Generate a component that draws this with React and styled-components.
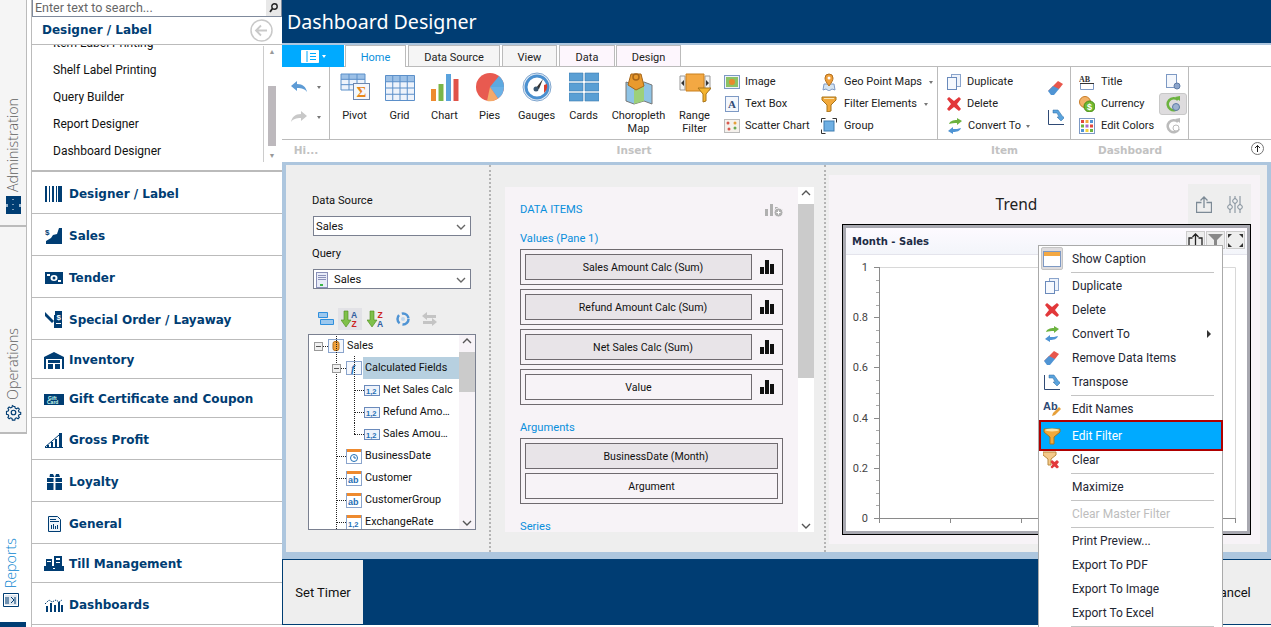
import React from "react";
import styled, { createGlobalStyle } from "styled-components";

const NAVY = "#003d73";
const FONT = `Roboto, "Noto Sans", "Liberation Sans", sans-serif`;

const Global = createGlobalStyle`
  html, body { margin: 0; padding: 0; background: #fff; overflow: hidden; }
  #root { width: 1271px; height: 627px; }
  * { box-sizing: border-box; }
`;

const Page = styled.div`
  position: relative; width: 1271px; height: 627px; overflow: hidden;
  display: grid; grid-template-columns: 32px 250px 1fr;
  font: 12px/16px ${FONT}; color: #1c2430; background: #fff;
`;

/* rail */
const Rail = styled.div`display: flex; flex-direction: column; height: 627px; border-right: 1px solid #bbb;`;
const RailTab = styled.div`
  height: ${p => p.$h}px; width: ${p => p.$w}px; flex: none;
  background: ${p => p.$active ? "#fff" : "#f5f5f5"};
  border-right: ${p => p.$active ? "none" : "1px solid #bbb"};
  border-bottom: ${p => p.$active ? "none" : "2px solid #bbb"};
  display: flex; flex-direction: column; align-items: center; justify-content: flex-end;
  padding-bottom: ${p => p.$pb}px; gap: ${p => p.$active ? 5 : 4}px;
  color: ${p => p.$active ? "#0a86d0" : "#5f5f5f"};
`;
const RailLabel = styled.span`
  writing-mode: vertical-rl; transform: rotate(180deg);
  font: 300 14.300px/16px "Open Sans", ${FONT};
`;
const RailEnd = styled.div`flex: 1; width: 26px; background: ${NAVY};`;

/* nav */
const Nav = styled.div`display: flex; flex-direction: column; height: 627px;`;
const SearchBar = styled.div`
  height: 17px; flex: none; display: flex; border: 1px solid #7f8a9c; border-top: none;
  color: #666; font-size: 12.500px; line-height: 14px; padding-left: 2px; align-items: center; justify-content: space-between;
`;
const SearchBtn = styled.div`width: 15px; height: 16px; background: #e8e8e8; display: flex; align-items: center; justify-content: center;`;
const NavHead = styled.div`
  height: 28px; flex: none; display: flex; align-items: center; justify-content: space-between;
  padding: 0 9px 1px 10px; border-bottom: 1px solid #bbb; color: ${NAVY};
  font: bold 12px/16px "DejaVu Sans", sans-serif;
`;
const NavList = styled.div`
  height: 127px; flex: none; position: relative; overflow: hidden; display: flex; justify-content: space-between;
  border-bottom: 2px solid #bbb;
`;
const NavLinks = styled.div`margin-top: -15px; padding-left: 21px; color: #111;`;
const NavLink = styled.div`height: 27px; line-height: 27px;`;
const NavScroll = styled.div`
  width: 17px; margin: 1px 2px 8px 0; border-left: 1px solid #ccc; display: flex; flex-direction: column;
  align-items: center; justify-content: space-between; position: relative; color: #999; font-size: 7px; line-height: 12px;
`;
const NavThumb = styled.div`position: absolute; top: 40px; left: 4px; width: 8px; height: 60px; background: #bdb9bd;`;
const Accordion = styled.div`
  height: ${p => p.$h}px; flex: none; display: flex; align-items: center; gap: 5px;
  padding: 2px 0 0 12px; border-bottom: 1px solid #bbb;
  color: ${NAVY}; font: bold 12px/16px "DejaVu Sans", sans-serif;
`;
const NavIconBox = styled.span`width: 20px; height: 20px; flex: none; display: flex; align-items: center; justify-content: center;`;

/* main */
const Main = styled.div`display: flex; flex-direction: column; height: 627px; min-width: 0;`;
const TitleBar = styled.div`
  height: 43px; flex: none; background: ${NAVY}; color: #fff; padding: 8px 5px 0;
  font: 19.600px/28px "Noto Sans", sans-serif;
`;
const TitleRule = styled.div`height: 2px; flex: none; background: #adc6de;`;
const TabRow = styled.div`height: 22px; flex: none; display: flex; border-bottom: 1px solid #bbb; position: relative; font-size: 11px;`;
const AppMenu = styled.div`
  width: 62px; height: 22px; background: #00aaff; display: flex; align-items: center; justify-content: center; gap: 3px;
  margin-right: 1px;
`;
const Tab = styled.div`
  width: ${p => p.$w}px; height: ${p => p.$active ? 22 : 21}px; margin-right: ${p => p.$mr}px; text-align: center; line-height: 24px;
  border: 1px solid #bbb; border-bottom: none; z-index: 1;
  background: ${p => p.$active ? "#fff" : p.$tint ? "#fdf6fd" : "#f5f5f5"};
  color: ${p => p.$active ? "#0a8fdc" : "#222"};
`;
const Ribbon = styled.div`height: 73px; flex: none; display: flex; border-bottom: 1px solid #bbb; font-size: 11px;`;
const RGroup = styled.div`
  width: ${p => p.$w}px; flex: none; border-right: 1px solid #bbb; display: flex;
  padding: ${p => p.$pad || "0"};
`;
const HistoryCol = styled.div`display: flex; flex-direction: column; gap: 10px; padding: 10px 0 0 9px;`;
const HistoryBtn = styled.div`display: flex; align-items: center; gap: 10px; height: 20px;`;
const Caret = styled.span`
  width: 0; height: 0; border-left: 2.500px solid transparent; border-right: 2.500px solid transparent;
  border-top: 3px solid ${p => p.$c || "#777"}; display: inline-block; flex: none;
`;
const BigBtn = styled.div`
  width: ${p => p.$w}px; flex: none; display: flex; flex-direction: column; align-items: center; padding-top: 5px;
  text-align: center; line-height: 13px; color: #222;
`;
const BigIcon = styled.div`height: 32px; margin-bottom: 5px;`;
const SmallCol = styled.div`
  width: ${p => p.$w}px; flex: none; display: flex; flex-direction: column; padding-top: 4px;
  margin-left: ${p => p.$ml || 0}px;
`;
const SmallBtn = styled.div`
  height: 22px; display: flex; align-items: center; gap: ${p => p.$gap || 5}px; color: #222; white-space: nowrap;
`;
const IconOnly = styled.div`
  height: ${p => p.$h || 22}px; width: 28px; display: flex; align-items: center; justify-content: center; flex: none;
  border-radius: 3px; ${p => p.$on && "background:#dedcde;border:1px solid #c8c8c8;"}
`;
const LabelRow = styled.div`
  height: 22px; flex: none; display: flex; font: bold 10.500px/21px "DejaVu Sans", sans-serif; color: #c2c2c2; position: relative;
`;
const GroupLabel = styled.div`width: ${p => p.$w}px; text-align: center; flex: none;`;
const Collapse = styled.div`
  margin-left: auto; margin-right: 7px; margin-top: 2px; width: 13px; height: 13px; border: 1px solid #777; border-radius: 50%;
  color: #333; display: flex; align-items: center; justify-content: center;
`;

/* workspace */
const Workspace = styled.div`height: 397px; flex: none; background: #adc6de; padding: 3px 4px 7px 4px;`;
const Inner = styled.div`
  height: 387px; background: #eeeeee; display: grid; grid-template-columns: 205px 335px 1fr; font-size: 11.200px;
`;
const DataPane = styled.div`
  border-right: 2px dotted #b4b4b4; padding: 28px 0 0 26px; display: flex; flex-direction: column;
`;
const FieldLabel = styled.div`height: 16px; line-height: 16px; color: #111; margin-bottom: ${p => p.$mb}px;`;
const Select = styled.div`
  width: 158px; height: 20px; flex: none; margin: 0 0 ${p => p.$mb}px 1px; background: #fff; border: 1px solid #7a8090; display: flex; align-items: center;
  justify-content: space-between; padding: 1px 4px 0 2px; color: #111;
`;
const SelectText = styled.span`display: flex; align-items: center; gap: 6px;`;
const SortBar = styled.div`height: 26px; flex: none; display: flex; align-items: center; margin: 0 0 2px 2px;`;
const SortBtn = styled.div`
  width: ${p => p.$w}px; height: 22px; display: flex; align-items: center; justify-content: center;
  ${p => p.$on && "background:#e2e2e6;"}
`;
const Tree = styled.div`
  margin-left: -4px; width: 168px; height: 196px; flex: none; background: #fff; border: 1px solid #7a8090; display: flex; overflow: hidden; font-size: 10.800px;
`;
const TreeBody = styled.div`flex: 1; min-width: 0; padding-top: 0; overflow: hidden;`;
const TreeRow = styled.div`
  height: 22px; position: relative; display: flex; align-items: center; padding-left: ${p => p.$pad}px; white-space: nowrap; color: #111;
  ${p => p.$vline && `&::before{content:"";position:absolute;left:${p.$vline}px;top:-1px;bottom:0;border-left:1px dotted #222;}`}
  ${p => p.$vline2 && `&::after{content:"";position:absolute;left:${p.$vline2}px;top:-1px;bottom:${p.$short ? 11 : 0}px;border-left:1px dotted #222;}`}
`;
const Expander = styled.span`
  width: 9px; height: 9px; flex: none; border: 1px solid #999; background: #f0f0f0; position: relative; z-index: 1;
  &::after{content:"";position:absolute;left:1px;right:1px;top:3px;height:1px;background:#555;}
`;
const Dots = styled.span`width: ${p => p.$w}px; flex: none; border-top: 1px dotted #222;`;
const TreeText = styled.span`
  margin-left: 3px; height: 22px; line-height: 22px; flex: ${p => p.$fill ? 1 : "none"};
  ${p => p.$fill && "background:#b7d0e0;margin-left:1px;padding-left:2px;"}
`;
const VScroll = styled.div`
  width: 16px; flex: none; background: ${p => p.$bg || "#f7f3f7"}; display: flex; flex-direction: column; justify-content: space-between; align-items: center; position: relative;
  padding: 3px 0;
`;
const VThumb = styled.div`position: absolute; left: 0; right: 0; top: ${p => p.$t}px; height: ${p => p.$h}px; background: #cbcbcb;`;

const ItemsWrap = styled.div`border-right: 2px dotted #b4b4b4; padding: 22px 10px 20px 14px;`;
const ItemsPane = styled.div`height: 345px; background: #f7f3f7; display: flex; overflow: hidden;`;
const ItemsBody = styled.div`flex: 1; padding: 15px 15px 0 15px; overflow: hidden; color: #111;`;
const ItemsHead = styled.div`display: flex; justify-content: space-between; align-items: center; height: 16px; color: #0a8fdc; margin-bottom: 13px;`;
const SectionTitle = styled.div`color: #0a8fdc; height: 16px; line-height: 16px; margin: ${p => p.$mt || 0}px 0 2px;`;
const Frame = styled.div`
  border: 1px solid #6f6a6f; padding: 4px; display: flex; flex-direction: column; gap: 4px; margin-bottom: 4px;
`;
const FrameRow = styled.div`display: flex; align-items: center; justify-content: space-between;`;
const Pill = styled.div`
  flex: 1 0 auto; height: 26px; line-height: 25px; text-align: center; border: 1px solid #6f6a6f; font-size: 10.600px;
  background: ${p => p.$filled ? "#e8e4e8" : "#f7f3f7"}; padding-left: ${p => p.$filled ? 9 : 0}px;
`;
const BarsSlot = styled.div`width: 26px; flex: none; display: flex; justify-content: center; padding-left: 3px;`;

const TrendWrap = styled.div`padding: 10px 8px 8px 3px;`;
const TrendPane = styled.div`height: 369px; background: #f7f3f7; padding: 9px 9px 9px 13px; display: flex; flex-direction: column;`;
const TrendHead = styled.div`height: 40px; flex: none; position: relative; text-align: center; font: 15.500px/40px "Noto Sans", sans-serif; color: #222; padding-right: 60px;`;
const TrendTools = styled.div`
  position: absolute; right: 0; top: 0; width: 63px; height: 40px; background: #eee; display: flex; align-items: center; justify-content: space-around;
`;
const ChartFrame = styled.div`flex: 1; border: 1px solid #000; background: #fff; box-shadow: inset 0 0 0 3px #a8a8b0; padding: 3px; display: flex; flex-direction: column;`;
const ChartHead = styled.div`
  height: 27px; flex: none; background: linear-gradient(#fdfaff, #f3f5fa); border-bottom: 1px solid #e4e4ec; display: flex; align-items: center; justify-content: space-between;
  padding: 1px 2px 0 6px; font: bold 10px/14px "DejaVu Sans", sans-serif; color: #1d2b45;
`;
const ChartBtns = styled.div`display: flex; gap: 1px; margin-top: -3px;`;
const ChartBtn = styled.div`width: 19px; height: 18px; border: 1px solid #ccc; background: #eee; display: flex; align-items: center; justify-content: center;`;
const ChartSvg = styled.svg`display: block; flex: 1;`;

/* footer */
const Footer = styled.div`height: 66px; flex: none; background: ${NAVY}; display: flex; justify-content: space-between; padding-left: 1px;`;
const FootBtn = styled.div`
  width: ${p => p.$w}px; background: #eee; display: flex; align-items: center; justify-content: center; color: #111; font-size: 13px;
  margin: 1px 0; padding-top: 2px;
`;

/* context menu */
const Menu = styled.div`
  position: absolute; left: 1038px; top: 245px; width: 185px; height: 390px; background: #fff;
  border: 1px solid #aaa; padding-top: 1px; z-index: 5; color: #2a3240;
`;
const MItem = styled.div`
  position: relative; height: 24px; display: flex; align-items: center; padding-left: 33px;
  color: ${p => p.$off ? "#bdbdbd" : p.$hot ? "#fff" : "#1f2733"};
  ${p => p.$hot && `
    &::before{content:"";position:absolute;left:0;right:0;top:-2px;bottom:-1px;background:#00aaff;}
    &::after{content:"";position:absolute;left:0;right:-1px;top:-4px;bottom:-3px;border:2px solid #b00000;z-index:2;}
  `}
`;
const MText = styled.span`position: relative; z-index: 1;`;
const MIcon = styled.span`
  position: absolute; left: ${p => p.$on ? 2 : 4}px; top: ${p => p.$on ? 0 : 3}px; z-index: 1; display: flex; align-items: center; justify-content: center;
  width: ${p => p.$on ? 22 : 18}px; height: ${p => p.$on ? 23 : 18}px;
  ${p => p.$on && "background:#dedcde;border:1px solid #c4c4c4;border-radius:2px;"}
`;
const MSep = styled.div`height: 3px; margin: 0 8px 0 32px; display: flex; align-items: center; &::after{content:"";flex:1;height:1px;background:#c4c4c4;}`;
const MArrow = styled.span`
  position: absolute; right: 11px; top: 8px; border-left: 4px solid #333; border-top: 4px solid transparent; border-bottom: 4px solid transparent;
`;

/* ---- drawings ---- */
const S = ({ w = 16, h, vb, children }) => (
  <svg width={w} height={h || w} viewBox={vb || `0 0 ${w} ${h || w}`} style={{ display: "block", flex: "none" }}>{children}</svg>
);

const Chevron = ({ up, c = "#555" }) => (
  <S w={10} h={6}><path d={up ? "M1 5l4-4 4 4" : "M1 1l4 4 4-4"} fill="none" stroke={c} strokeWidth="1.4" /></S>
);
const Bars = () => (
  <S w={14} h={14}><path d="M0 7h4v7H0zM5 0h4v14H5zM10 4h4v10h-4z" fill="#111" /></S>
);

const n = NAVY;
const NavIcons = {
  barcode: <S w={18} h={16}><path d="M0 0h2v16H0zM4 0h1v16H4zM7 0h2v16H7zM11 0h1v16h-1zM13 0h4v16h-4z" fill={n} /></S>,
  sales: <S w={18} h={18}><path d="M1 17v-3l5-3 2-3 4-1 2-6h3v16z" fill={n} /><text x="0" y="8" fontSize="8" fontWeight="bold" fill={n} fontFamily="Liberation Sans">$</text></S>,
  tender: <S w={18} h={12}><path d="M0 0h18v12H0z" fill={n} /><ellipse cx="9" cy="6" rx="3.5" ry="3" fill="#fff" /><circle cx="9" cy="6" r="1.5" fill={n} /><path d="M2 2h3v2H2zM13 8h3v2h-3z" fill="#fff" /></S>,
  special: <S w={20} h={18}><path d="M1 1l9 9-2 2-7-7z" fill={n} /><path d="M11 0h7v17h-7zM10 4v13h1V4z" fill={n} /><text x="12.5" y="9" fontSize="8" fontWeight="bold" fill="#fff" fontFamily="Liberation Sans">$</text><path d="M12 12h5v1h-5z" fill="#fff" /></S>,
  inventory: <S w={20} h={17}><path d="M0 5L10 0l10 5v12h-2V7H2v10H0z" fill={n} /><path d="M4 8h12v3H4zM4 12h5v5H4zM11 12h5v5h-5z" fill={n} /></S>,
  gift: <S w={20} h={11}><path d="M0 0h20v11H0z" fill={n} /><text x="4" y="5.5" fontSize="5" fill="#cfe" fontFamily="Liberation Sans">Gift</text><text x="3" y="10" fontSize="5" fill="#cfe" fontFamily="Liberation Sans">Card</text></S>,
  profit: <S w={18} h={16}><path d="M0 15L14 3" stroke={n} fill="none" /><path d="M2 13h2v3H2zM6 10h2v6H6zM10 7h2v9h-2zM14 1h3v15h-3zM0 15h18v1H0z" fill={n} /></S>,
  loyalty: <S w={15} h={16}><path d="M0 4h15v12H0z" fill={n} /><path d="M6.500 4h2v12h-2zM0 8h15v1H0z" fill="#fff" /><path d="M3 0h3l1.500 3h-5zM9 0h3l1 3H8z" fill={n} /></S>,
  general: <S w={13} h={16}><path d="M.5.5h9l3 3v12H.5z" fill="#eef4fa" stroke={n} /><path d="M2 3h6v1H2zM2 5h9v1H2zM3 9h1v4H3zM5 8h1v5H5zM7 10h1v3H7zM9 9h1v4H9z" fill={n} /></S>,
  till: <S w={20} h={16}><path d="M0 10h20v5H0zM2 3h6v7H2zM10 0h8v10h-8z" fill={n} /><path d="M12 2h4v2h-4zM3 5h4v1H3zM12 6h4v1h-4zM9 12h2v1H9z" fill="#fff" /></S>,
  dash: <S w={18} h={14}><path d="M1 8h2v6H1zM5 5h2v9H5zM9 7h2v7H9zM13 4h2v10h-2zM16 7h2v7h-2z" fill={n} /><path d="M0 6l4-4 3 2 4-2 3 2 3-2" fill="none" stroke={n} strokeDasharray="1.5 1" /></S>,
};

const Briefcase = () => <S w={15} h={18}><path d="M0 0h15v18H0z" fill={n} /><path d="M7 3v12" stroke="#fff" strokeDasharray="1 4" /><path d="M0 8h2v3H0zM13 8h2v3h-2z" fill="#9fb9d0" /></S>;
const Gear = () => (
  <svg width="17" height="17" viewBox="0 0 24 24" fill="none" stroke={n} strokeWidth="1.7" style={{ display: "block" }}>
    <circle cx="12" cy="12" r="3.2" />
    <path d="M12 2.500l2 .3.6 2.600 2 .9 2.300-1.400 2 2-1.400 2.300.9 2 2.600.6v2.800l-2.600.6-.9 2 1.400 2.300-2 2-2.300-1.400-2 .9-.6 2.600H10.200l-.6-2.600-2-.9-2.300 1.400-2-2 1.400-2.300-.9-2-2.600-.6V10.400l2.600-.6.9-2L3.300 5.500l2-2 2.300 1.400 2-.9.6-2.600z" transform="translate(1 1) scale(.92)" />
  </svg>
);
const ReportIcon = () => <S w={16} h={14}><path d="M.5.5h15v13H.5z" fill="none" stroke={n} /><path d="M2 2h12v10H2z" fill="#dfe7ef" /><path d="M3 4v7M5 4v7M8 4l3 3-3 3M12 4v7" fill="none" stroke={n} /></S>;

const Blue = "#5b8fc9";
const IcoMenu = <S w={18} h={13}><path d="M.5.5h17v12H.5z" fill="#fff" stroke="#fff" /><path d="M6 1v11" stroke="#00aaff" /><path d="M9 3h6v1H9zM9 6h6v1H9zM9 9h6v1H9z" fill="#00aaff" /></S>;
const Undo = () => <S w={16} h={12}><path d="M0 5l6-5v3c6 0 9 3 10 8-2-3-5-4-10-4v3z" fill="#5d9bd5" /></S>;
const Redo = () => <S w={16} h={12}><path d="M16 5l-6-5v3C4 3 1 6 0 11c2-3 5-4 10-4v3z" fill="#c8c8c8" /></S>;

const GridCells = ({ x, y, w, h, cols, rows, c = Blue, head }) => {
  const cw = w / cols, rh = h / rows, out = [];
  for (let i = 0; i <= cols; i++) out.push(<path key={"c" + i} d={`M${x + i * cw} ${y}v${h}`} stroke={c} />);
  for (let i = 0; i <= rows; i++) out.push(<path key={"r" + i} d={`M${x} ${y + i * rh}h${w}`} stroke={c} />);
  return <g><rect x={x} y={y} width={w} height={h} fill="#eef3fb" />{head && <rect x={x} y={y} width={w} height={rh} fill="#9cc0e6" />}{out}</g>;
};
const Ribbons = {
  pivot: <S w={30} h={30}><GridCells x={1} y={2} w={24} h={16} cols={3} rows={3} head /><rect x="13.500" y="11.500" width="16" height="16" fill="#f4f7fc" stroke="#6d86ad" /><text x="16.500" y="25" fontSize="15" fontWeight="bold" fill="#e8871c" fontFamily="Liberation Serif">Σ</text></S>,
  grid: <S w={30} h={30}><GridCells x={.5} y={3.5} w={29} h={25} cols={4} rows={4} head /></S>,
  chart: <S w={30} h={30}><path d="M1 17h5v12H1z" fill="#ee8a2e" /><path d="M8.500 12h5v17h-5z" fill="#7ab648" /><path d="M16 2h5v27h-5z" fill="#5aa3dd" /><path d="M23.500 7h5v22h-5z" fill="#e05349" /></S>,
  pies: <S w={30} h={30}><circle cx="15" cy="15" r="14" fill="#e85a50" /><path d="M15 15l9-11a14 14 0 0 1 5 11z" fill="#5da9e0" /><path d="M15 15h14a14 14 0 0 1-6 11.500z" fill="#6ab1e6" /><path d="M15 15l8 11.500A14 14 0 0 1 12 29z" fill="#f4a96a" /></S>,
  gauges: <S w={30} h={30}><circle cx="15" cy="15" r="14" fill="#e8eef6" stroke="#7fa6cf" /><circle cx="15" cy="15" r="11" fill="#fff" stroke="#4a90d0" strokeWidth="3" /><path d="M22 21a10 10 0 0 0 3-9l-3 1z" fill="#d8402f" /><path d="M14 16l7-9-4 10z" fill="#333" /><circle cx="14" cy="17" r="2.500" fill="#39566f" /></S>,
  cards: <S w={30} h={30}><path d="M0 1h14v8H0zM16 1h14v8H16zM0 11h14v8H0zM16 11h14v8H16zM0 21h14v8H0zM16 21h14v8H16z" fill="#5a9fd4" stroke="#3e7cb0" strokeWidth=".6" /></S>,
  map: <S w={30} h={34} vb="0 0 30 34"><path d="M2 10l8 3 10-3 8 3v19l-8-3-10 3-8-3z" fill="#8fc4e6" stroke="#777" /><path d="M10 13l10-3v19l-10 3z" fill="#9dd07a" /><path d="M7 2h10l3 12-8 4-8-5z" fill="#e99a2e" stroke="#a7661a" /><circle cx="12" cy="5" r="3" fill="none" stroke="#a7661a" strokeWidth="1.500" /></S>,
  range: <S w={32} h={32}><path d="M1 4h5v14H1zM26 4h5v14h-5z" fill="#f4f4f4" stroke="#999" /><path d="M7 2h18v17H7z" fill="#f3a843" stroke="#c9801f" /><path d="M5 8l-3 3 3 3zM27 8l3 3-3 3z" fill="#333" /><path d="M19 16h13l-5 6v7l-3 1v-8z" fill="#f5b42e" stroke="#a8741a" /></S>,
};

const Sm = {
  image: <S><rect x=".5" y="1.500" width="15" height="13" fill="#eef3fa" stroke="#7d99c4" /><rect x="2" y="3" width="12" height="10" fill="#8cc265" /><circle cx="8" cy="8" r="3" fill="#e88a2d" /></S>,
  text: <S><rect x="1.500" y=".5" width="13" height="15" fill="#f4f7fc" stroke="#7d99c4" /><text x="4" y="12" fontSize="11" fontWeight="bold" fill="#2f4a75" fontFamily="Liberation Serif">A</text></S>,
  scatter: <S><rect x=".5" y="1.500" width="15" height="13" fill="#f5f1ec" stroke="#bbb" /><circle cx="4" cy="5" r="1.500" fill="#d8584d" /><circle cx="11" cy="5" r="1.500" fill="#e6a03a" /><circle cx="5" cy="11" r="1.500" fill="#d8584d" /><circle cx="11" cy="10" r="1.500" fill="#6aa84f" /></S>,
  geo: <S h={18} vb="0 0 16 18"><path d="M3 11l-1 6 3-1 3 2 3-2 3 1-1-6z" fill="#d5e4f2" stroke="#7d99c4" /><path d="M8 13C5 9 4 7 4 5a4 4 0 0 1 8 0c0 2-1 4-4 8z" fill="#f0a03a" stroke="#b36f1c" /><circle cx="8" cy="5" r="1.500" fill="#fff" /></S>,
  filter: <S><path d="M1 1h14v3l-5 5v6l-4 1V9L1 4z" fill="#f2a93b" stroke="#a8741a" /><path d="M3 2h10v1H3z" fill="#fde6b0" /></S>,
  group: <S><path d="M.5 4.500v-4h4M11.500.5h4v4M.5 11.500v4h4" fill="none" stroke="#333" /><rect x="3" y="3" width="10" height="10" fill="#6fb0e4" stroke="#3e7cb0" /></S>,
  dup: <S w={14} h={16}><rect x="4.500" y=".5" width="9" height="12" fill="#eef3fb" stroke="#8aa4cc" /><rect x=".5" y="3.500" width="9" height="12" fill="#f6f9fe" stroke="#6a8abb" /></S>,
  del: <S w={14} h={14}><path d="M2 0l5 4 5-4 2 2-4 5 4 5-2 2-5-4-5 4-2-2 4-5-4-5z" fill="#e2383a" /></S>,
  conv: <S><path d="M2 6c1-3 4-4 8-4V0l5 3-5 4V5C7 5 5 5 2 6z" fill="#6cb33f" /><path d="M14 10c-1 3-4 4-8 4v2l-5-3 5-4v2c3 0 5 0 8-1z" fill="#4f94d4" /></S>,
  eraser: <S><path d="M0 11L10 1l5 3-4 5z" fill="#e8564c" /><path d="M0 11l5-5 6 3-5 6H3z" fill="#4f94d4" /></S>,
  transpose: <S><path d="M.5 1v14.500H16" fill="none" stroke="#2f4a75" /><path d="M5 1h5l5 7h2l-4 4-4-4h2L9 4H5z" fill="#5aa3dd" stroke="#2f6aa0" strokeWidth=".5" /></S>,
  title: <S><text x="0" y="7.500" fontSize="8" fontWeight="bold" fill="#333" fontFamily="Liberation Serif">AB</text><path d="M1.500 9.500h13v6h-13z" fill="#fff" stroke="#7d99c4" /><path d="M1 9h14v1H1z" fill="#333" /></S>,
  currency: <S><circle cx="6" cy="6" r="5.500" fill="#f3b268" stroke="#c77b25" /><circle cx="10.500" cy="10.500" r="5.500" fill="#6fb82f" stroke="#4a8b18" /><text x="8" y="14" fontSize="9" fontWeight="bold" fill="#fff" fontFamily="Liberation Sans">$</text></S>,
  colors: <S><rect x=".5" y=".5" width="15" height="15" fill="#fff" stroke="#7d99c4" /><path d="M2 2h3v3H2z" fill="#e2483d" /><path d="M6.500 2h3v3h-3z" fill="#f2a93b" /><path d="M11 2h3v3h-3z" fill="#4f94d4" /><path d="M2 6.500h3v3H2z" fill="#6cb33f" /><path d="M6.500 6.500h3v3h-3z" fill="#a66cc7" /><path d="M11 6.500h3v3h-3z" fill="#e2483d" /><path d="M2 11h3v3H2z" fill="#4f94d4" /><path d="M6.500 11h3v3h-3z" fill="#f2d23b" /><path d="M11 11h3v3h-3z" fill="#6cb33f" /></S>,
  page: <S><rect x="1.500" y=".5" width="10" height="13" fill="#f4f7fc" stroke="#7d99c4" /><circle cx="12" cy="12" r="3" fill="#8aa4cc" stroke="#5f7ba6" /></S>,
  reload: <S><path d="M13 4a6 6 0 1 0 1 7" fill="none" stroke="#6cb33f" strokeWidth="2.500" /><path d="M10 1l5-1v5z" fill="#6cb33f" /><circle cx="11" cy="11" r="3.500" fill="#9cb2cf" stroke="#5f7ba6" /></S>,
  reloadOff: <S><path d="M13 4a6 6 0 1 0 1 7" fill="none" stroke="#bbb" strokeWidth="2.500" /><path d="M10 1l5-1v5z" fill="#bbb" /><circle cx="11" cy="10" r="3" fill="#fff" stroke="#bbb" /></S>,
  caption: <S w={18} h={18}><rect x=".5" y="1.500" width="17" height="15" fill="#fff" stroke="#7d99c4" /><rect x="1" y="2" width="16" height="4" fill="#f3a843" /></S>,
  names: <S w={18} h={18}><text x="0" y="10" fontSize="11" fontWeight="bold" fill="#2f4a75" fontFamily="Liberation Sans">Ab</text><path d="M9 16l1-3 6-6 2 2-6 6z" fill="#e6a03a" /></S>,
  funnel: <S w={18} h={18}><path d="M1 2h16v3l-6 5v7h-4v-7L1 5z" fill="#f2a93b" stroke="#a8741a" /><ellipse cx="9" cy="3" rx="7" ry="1.500" fill="#fbe3a8" /></S>,
  clear: <S w={18} h={18}><path d="M0 1h13v3l-5 4v6H5V8L0 4z" fill="#f4c98a" stroke="#b98a3e" /><path d="M9 9l2.500 2 2.500-2 2 2-2 2.500 2 2.500-2 1.500-2.500-2-2.500 2-1.500-1.500 2-2.500-2-2.500z" fill="#e2383a" /></S>,
  db: <S><rect x=".5" y="1.500" width="15" height="13" fill="#f4f7fc" stroke="#8aa4cc" /><rect x="5" y="3.500" width="6" height="9" rx="2" fill="#f0a03a" stroke="#b36f1c" /></S>,
  fx: <S><rect x=".5" y="1.500" width="15" height="13" fill="#f4f7fc" stroke="#8aa4cc" /><text x="5" y="12" fontSize="11" fontStyle="italic" fontWeight="bold" fill="#1f6fb5" fontFamily="Liberation Serif">f</text></S>,
  num: <S h={11} vb="0 0 16 11"><rect x=".5" y=".5" width="15" height="10" fill="#eef3fb" stroke="#6a8abb" /><text x="2" y="8.500" fontSize="7.500" fontWeight="bold" fill="#1f6fb5" fontFamily="Liberation Sans">1,2</text></S>,
  clock: <S><rect x=".5" y="1.500" width="15" height="14" fill="#fff" stroke="#8aa4cc" /><rect x="1" y="1" width="14" height="3" fill="#ee8a2e" /><circle cx="8" cy="10" r="3.500" fill="none" stroke="#1f6fb5" /><path d="M8 8v2h2" stroke="#1f6fb5" fill="none" /></S>,
  ab: <S><rect x=".5" y="1.500" width="15" height="14" fill="#fff" stroke="#8aa4cc" /><rect x="1" y="1" width="14" height="3" fill="#ee8a2e" /><text x="2" y="13" fontSize="9" fontWeight="bold" fill="#1f6fb5" fontFamily="Liberation Sans">ab</text></S>,
  num2: <S><rect x=".5" y="1.500" width="15" height="14" fill="#fff" stroke="#8aa4cc" /><rect x="1" y="1" width="14" height="3" fill="#ee8a2e" /><text x="2" y="13" fontSize="7.500" fontWeight="bold" fill="#1f6fb5" fontFamily="Liberation Sans">1,2</text></S>,
  queryDoc: <S w={12} h={16}><rect x=".5" y=".5" width="11" height="15" fill="#e8ecf8" stroke="#8a90b8" /><path d="M2 3h8v1H2zM2 5h8v1H2zM2 7h8v1H2z" fill="#8a90b8" /><path d="M4 12h3v2H4z" fill="#3cb64a" /></S>,
  collapseAll: <S w={16} h={14}><path d="M.5 .5h9v5h-9z" fill="#9cc8ee" stroke="#2f8fdc" /><path d="M2.500 7.500h13v5h-13z" fill="#9cc8ee" stroke="#2f8fdc" /></S>,
  az: <S w={18} h={18}><path d="M3 1h4v9h3l-5 7-5-7h3z" fill="#7fc04a" stroke="#4a8b18" strokeWidth=".6" /><text x="10" y="8" fontSize="8.500" fontWeight="bold" fill="#2f5f9e" fontFamily="Liberation Sans">A</text><text x="10.500" y="17" fontSize="8.500" fontWeight="bold" fill="#c22" fontFamily="Liberation Sans">Z</text></S>,
  za: <S w={18} h={18}><path d="M3 1h4v9h3l-5 7-5-7h3z" fill="#7fc04a" stroke="#4a8b18" strokeWidth=".6" /><text x="10.500" y="8" fontSize="8.500" fontWeight="bold" fill="#c22" fontFamily="Liberation Sans">Z</text><text x="10" y="17" fontSize="8.500" fontWeight="bold" fill="#2f5f9e" fontFamily="Liberation Sans">A</text></S>,
  refresh: <S><circle cx="8" cy="8" r="5.500" fill="none" stroke="#4f94d4" strokeWidth="2.500" strokeDasharray="9 3" /><circle cx="8" cy="8" r="2" fill="#bcd6ee" /></S>,
  swap: <S w={15} h={14}><path d="M5 0v3h9v3H5v2L0 4zM10 6v3H1v3h9v2l5-4z" fill="#c4c4c4" /></S>,
  addBars: <S w={18} h={14}><path d="M0 6h3v7H0zM5 1h3v12H5zM10 4h3v9h-3z" fill="#b0b0b0" /><circle cx="13.500" cy="9.500" r="4.500" fill="#b0b0b0" stroke="#f7f3f7" /><path d="M11.500 9h4v1h-4zM13 7.500h1v4h-1z" fill="#fff" /></S>,
  share: <S w={16} h={17}><path d="M5.500 6.500h-5v10h15v-10h-5M8 12V1M4.500 4.500L8 1l3.500 3.500" fill="none" stroke="#7c8a96" strokeWidth="1.300" /></S>,
  sliders: <S w={16} h={17}><path d="M3 0v17M8 0v17M13 0v17" stroke="#7c8a96" /><circle cx="3" cy="11" r="2.300" fill="#f0f0f0" stroke="#7c8a96" /><circle cx="8" cy="5" r="2.300" fill="#f0f0f0" stroke="#7c8a96" /><circle cx="13" cy="11" r="2.300" fill="#f0f0f0" stroke="#7c8a96" /></S>,
  cShare: <S w={15} h={14}><path d="M4.500 5H1v9M10.500 5H14v9M7.500 13V1M4.500 4l3-3 3 3" fill="none" stroke="#222" strokeWidth="1.300" /></S>,
  cFilter: <S w={15} h={14}><path d="M0 1h15L9 7v7H6V7z" fill="#888" /></S>,
  cMax: <S w={15} h={13}><path d="M0 0h4L0 4zM15 0h-4l4 4zM0 13h4l-4-4zM15 13h-4l4-4z" fill="#333" /></S>,
  back: <S w={23} h={23}><circle cx="11.500" cy="11.500" r="10.500" fill="#fff" stroke="#c9c9c9" strokeWidth="1.500" /><path d="M17 11.500H6M11 6.500l-5 5 5 5" fill="none" stroke="#c9c9c9" strokeWidth="1.800" /></S>,
  search: <S w={9} h={10}><circle cx="5.500" cy="3.500" r="2.700" fill="none" stroke="#222" strokeWidth="1.400" /><path d="M3.500 5.500L1 9" stroke="#222" strokeWidth="1.800" /></S>,
  up: <S w={9} h={9}><path d="M4.500 8V1.500M2 4l2.500-2.500L7 4" fill="none" stroke="#222" /></S>,
};

const navItems = [
  ["barcode", "Designer / Label", 42], ["sales", "Sales", 42], ["tender", "Tender", 42],
  ["special", "Special Order / Layaway", 42], ["inventory", "Inventory", 39],
  ["gift", "Gift Certificate and Coupon", 39], ["profit", "Gross Profit", 42],
  ["loyalty", "Loyalty", 42], ["general", "General", 42], ["till", "Till Management", 39], ["dash", "Dashboards", 42],
];

const bigs = [
  ["pivot", "Pivot", 45], ["grid", "Grid", 45], ["chart", "Chart", 45], ["pies", "Pies", 45],
  ["gauges", "Gauges", 49], ["cards", "Cards", 45], ["map", "Choropleth", 65, "Map"], ["range", "Range", 47, "Filter"],
];

const values = [["Sales Amount Calc (Sum)", true], ["Refund Amount Calc (Sum)", true], ["Net Sales Calc (Sum)", true], ["Value", false]];

const Trees = () => (
  <Tree>
    <TreeBody>
      <TreeRow $pad={5} $vline={27}>
        <Expander /><Dots $w={5} /><span>{Sm.db}</span><TreeText>Sales</TreeText>
      </TreeRow>
      <TreeRow $pad={23} $vline={27} $vline2={45}>
        <Expander /><Dots $w={5} /><span>{Sm.fx}</span><TreeText $fill>Calculated Fields</TreeText>
      </TreeRow>
      {["Net Sales Calc", "Refund Amo…", "Sales Amou…"].map((t, i) => (
        <TreeRow key={t} $pad={45} $vline={27} $vline2={45} $short={i === 2}>
          <Dots $w={10} /><span>{Sm.num}</span><TreeText>{t}</TreeText>
        </TreeRow>
      ))}
      {[["clock", "BusinessDate"], ["ab", "Customer"], ["ab", "CustomerGroup"], ["num2", "ExchangeRate"]].map(([ic, t]) => (
        <TreeRow key={t} $pad={27} $vline={27}>
          <Dots $w={10} /><span>{Sm[ic]}</span><TreeText>{t}</TreeText>
        </TreeRow>
      ))}
    </TreeBody>
    <VScroll><VThumb $t={17} $h={40} /><Chevron up /><Chevron /></VScroll>
  </Tree>
);

const Axis = () => {
  const ys = [0, 1, 2, 3, 4, 5];
  const top = 9, bot = 260, x = 33;
  return (
    <ChartSvg width="401" height="270" viewBox="0 0 401 270">
      <path d={`M${x - 5}.5 ${top}.5H389.500V${bot}`} fill="none" stroke="#d8d8d8" />
      <path d={`M${x}.5 ${top}V${bot + 5}M${x}.5 ${bot}.5H389.500`} fill="none" stroke="#8a8a8a" />
      {Array.from({ length: 21 }).map((_, i) => {
        const y = top + (i * 251) / 20;
        return i % 4 === 0 ? null : <path key={i} d={`M${x - 3} ${Math.round(y)}.5h3`} stroke="#aaa" />;
      })}
      {ys.map(i => {
        const y = Math.round(top + (i * 251) / 5);
        return (
          <g key={i}>
            <path d={`M${x - 5} ${y}.5h5`} stroke="#8a8a8a" />
            <text x={x - 11} y={y + 4} textAnchor="end" fontSize="11" fill="#444" fontFamily="Roboto">{["1", "0.8", "0.6", "0.4", "0.2", "0"][i]}</text>
          </g>
        );
      })}
      <path d={`M104.500 ${bot}v5M175.500 ${bot}v5M389.500 ${bot}v5`} stroke="#8a8a8a" />
    </ChartSvg>
  );
};

export default function App() {
  return (
    <Page>
      <Global />
      <Rail>
        <RailTab $h={227} $w={27} $pb={11}><RailLabel>Administration</RailLabel><Briefcase /></RailTab>
        <RailTab $h={207} $w={27} $pb={11}><RailLabel>Operations</RailLabel><Gear /></RailTab>
        <RailTab $h={188} $w={21} $active $pb={15}><RailLabel>Reports</RailLabel><ReportIcon /></RailTab>
        <RailEnd />
      </Rail>

      <Nav>
        <SearchBar>Enter text to search...<SearchBtn>{Sm.search}</SearchBtn></SearchBar>
        <NavHead>Designer / Label{Sm.back}</NavHead>
        <NavList>
          <NavLinks>
            {["Item Label Printing", "Shelf Label Printing", "Query Builder", "Report Designer", "Dashboard Designer"].map(t => <NavLink key={t}>{t}</NavLink>)}
          </NavLinks>
          <NavScroll><NavThumb /><span>▲</span><span>▼</span></NavScroll>
        </NavList>
        {navItems.map(([ic, t, h]) => (
          <Accordion key={t} $h={h}><NavIconBox>{NavIcons[ic]}</NavIconBox>{t}</Accordion>
        ))}
      </Nav>

      <Main>
        <TitleBar>Dashboard Designer</TitleBar>
        <TitleRule />
        <TabRow>
          <AppMenu>{IcoMenu}<Caret $c="#fff" /></AppMenu>
          <Tab $w={61} $mr={2} $active>Home</Tab>
          <Tab $w={92} $mr={2}>Data Source</Tab>
          <Tab $w={55} $mr={2}>View</Tab>
          <Tab $w={56} $mr={1} $tint>Data</Tab>
          <Tab $w={65} $mr={0} $tint>Design</Tab>
        </TabRow>
        <Ribbon>
          <RGroup $w={48}>
            <HistoryCol>
              <HistoryBtn><Undo /><Caret /></HistoryBtn>
              <HistoryBtn><Redo /><Caret /></HistoryBtn>
            </HistoryCol>
          </RGroup>
          <RGroup $w={608} $pad="0 0 0 2px">
            {bigs.map(([ic, a, w, b]) => (
              <BigBtn key={a} $w={w}><BigIcon>{Ribbons[ic]}</BigIcon>{a}{b && <span>{b}</span>}</BigBtn>
            ))}
            <SmallCol $w={97} $ml={6}>
              <SmallBtn>{Sm.image}Image</SmallBtn>
              <SmallBtn>{Sm.text}Text Box</SmallBtn>
              <SmallBtn>{Sm.scatter}Scatter Chart</SmallBtn>
            </SmallCol>
            <SmallCol $w={110}>
              <SmallBtn $gap={7}>{Sm.geo}Geo Point Maps <Caret /></SmallBtn>
              <SmallBtn $gap={7}>{Sm.filter}Filter Elements <Caret /></SmallBtn>
              <SmallBtn $gap={7}>{Sm.group}Group</SmallBtn>
            </SmallCol>
          </RGroup>
          <RGroup $w={133} $pad="0 0 0 9px">
            <SmallCol $w={95}>
              <SmallBtn $gap={6}>{Sm.dup}Duplicate</SmallBtn>
              <SmallBtn $gap={6}>{Sm.del}Delete</SmallBtn>
              <SmallBtn $gap={5}>{Sm.conv}Convert To <Caret /></SmallBtn>
            </SmallCol>
            <SmallCol $w={28}>
              <IconOnly $h={33}>{Sm.eraser}</IconOnly>
              <IconOnly $h={26}>{Sm.transpose}</IconOnly>
            </SmallCol>
          </RGroup>
          <RGroup $w={118} $pad="0 0 0 8px">
            <SmallCol $w={80}>
              <SmallBtn $gap={6}>{Sm.title}Title</SmallBtn>
              <SmallBtn $gap={6}>{Sm.currency}Currency</SmallBtn>
              <SmallBtn $gap={6}>{Sm.colors}Edit Colors</SmallBtn>
            </SmallCol>
            <SmallCol $w={28}>
              <IconOnly>{Sm.page}</IconOnly>
              <IconOnly $on>{Sm.reload}</IconOnly>
              <IconOnly>{Sm.reloadOff}</IconOnly>
            </SmallCol>
          </RGroup>
        </Ribbon>
        <LabelRow>
          <GroupLabel $w={48}>Hi...</GroupLabel>
          <GroupLabel $w={608}>Insert</GroupLabel>
          <GroupLabel $w={133}>Item</GroupLabel>
          <GroupLabel $w={118}>Dashboard</GroupLabel>
          <Collapse>{Sm.up}</Collapse>
        </LabelRow>

        <Workspace>
          <Inner>
            <DataPane>
              <FieldLabel $mb={7}>Data Source</FieldLabel>
              <Select $mb={10}><span>Sales</span><Chevron c="#666" /></Select>
              <FieldLabel $mb={7}>Query</FieldLabel>
              <Select $mb={17}><SelectText>{Sm.queryDoc}Sales</SelectText><Chevron c="#666" /></Select>
              <SortBar>
                <SortBtn $w={24}>{Sm.collapseAll}</SortBtn>
                <SortBtn $w={24} $on>{Sm.az}</SortBtn>
                <SortBtn $w={28}>{Sm.za}</SortBtn>
                <SortBtn $w={26}>{Sm.refresh}</SortBtn>
                <SortBtn $w={26}>{Sm.swap}</SortBtn>
              </SortBar>
              <Trees />
            </DataPane>

            <ItemsWrap>
              <ItemsPane>
                <ItemsBody>
                  <ItemsHead>DATA ITEMS{Sm.addBars}</ItemsHead>
                  <SectionTitle>Values (Pane 1)</SectionTitle>
                  {values.map(([t, f]) => (
                    <Frame key={t}>
                      <FrameRow><Pill $filled={f}>{t}</Pill><BarsSlot><Bars /></BarsSlot></FrameRow>
                    </Frame>
                  ))}
                  <SectionTitle $mt={15}>Arguments</SectionTitle>
                  <Frame>
                    <Pill $filled>BusinessDate (Month)</Pill>
                    <Pill>Argument</Pill>
                  </Frame>
                  <SectionTitle $mt={15}>Series</SectionTitle>
                </ItemsBody>
                <VScroll $bg="#fff"><VThumb $t={17} $h={174} /><Chevron up /><Chevron /></VScroll>
              </ItemsPane>
            </ItemsWrap>

            <TrendWrap>
              <TrendPane>
                <TrendHead>Trend<TrendTools>{Sm.share}{Sm.sliders}</TrendTools></TrendHead>
                <ChartFrame>
                  <ChartHead>Month - Sales
                    <ChartBtns>
                      <ChartBtn>{Sm.cShare}</ChartBtn><ChartBtn>{Sm.cFilter}</ChartBtn><ChartBtn>{Sm.cMax}</ChartBtn>
                    </ChartBtns>
                  </ChartHead>
                  <Axis />
                </ChartFrame>
              </TrendPane>
            </TrendWrap>
          </Inner>
        </Workspace>

        <Footer>
          <FootBtn $w={80}>Set Timer</FootBtn>
          <FootBtn $w={80}>Cancel</FootBtn>
        </Footer>
      </Main>

      <Menu>
        <MItem><MIcon $on>{Sm.caption}</MIcon><MText>Show Caption</MText></MItem>
        <MSep />
        <MItem><MIcon>{Sm.dup}</MIcon><MText>Duplicate</MText></MItem>
        <MItem><MIcon>{Sm.del}</MIcon><MText>Delete</MText></MItem>
        <MItem><MIcon>{Sm.conv}</MIcon><MText>Convert To</MText><MArrow /></MItem>
        <MItem><MIcon>{Sm.eraser}</MIcon><MText>Remove Data Items</MText></MItem>
        <MItem><MIcon>{Sm.transpose}</MIcon><MText>Transpose</MText></MItem>
        <MSep />
        <MItem><MIcon>{Sm.names}</MIcon><MText>Edit Names</MText></MItem>
        <MSep />
        <MItem $hot><MIcon>{Sm.funnel}</MIcon><MText>Edit Filter</MText></MItem>
        <MItem><MIcon>{Sm.clear}</MIcon><MText>Clear</MText></MItem>
        <MSep />
        <MItem><MText>Maximize</MText></MItem>
        <MSep />
        <MItem $off><MText>Clear Master Filter</MText></MItem>
        <MSep />
        <MItem><MText>Print Preview...</MText></MItem>
        <MItem><MText>Export To PDF</MText></MItem>
        <MItem><MText>Export To Image</MText></MItem>
        <MItem><MText>Export To Excel</MText></MItem>
        <MSep />
      </Menu>
    </Page>
  );
}
